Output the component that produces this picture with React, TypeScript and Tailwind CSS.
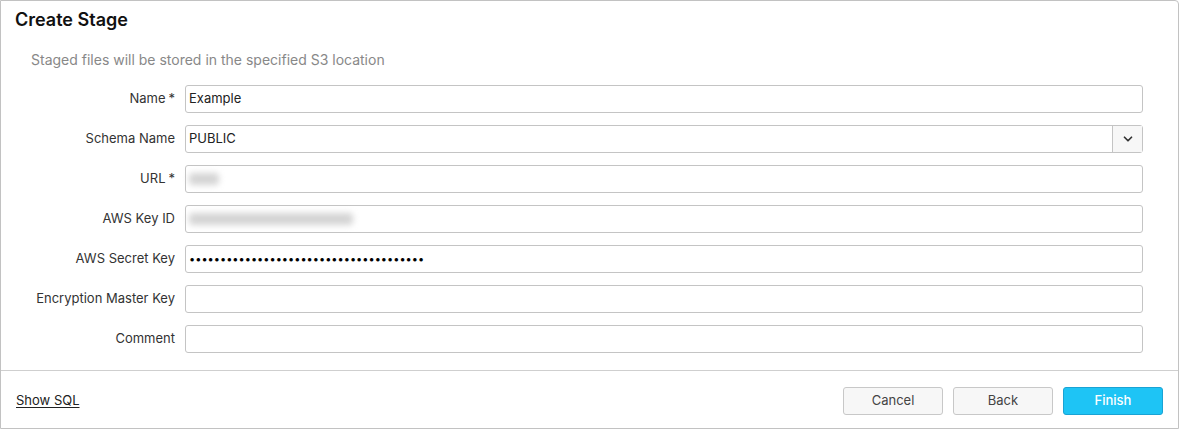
import { ChevronDown } from "lucide-react";

interface FieldProps {
  label: string;
  required?: boolean;
  children: React.ReactNode;
}

function Field({ label, required, children }: FieldProps) {
  return (
    <div className="flex h-[40px] items-center">
      <label className="w-[176px] shrink-0 pr-[2px] text-right text-[13px] text-[#333]">
        {label}
        {required && <span className="ml-[3px]">*</span>}
      </label>
      <div className="ml-[8px] flex-1 pr-[35px]">{children}</div>
    </div>
  );
}

function TextBox({ children }: { children?: React.ReactNode }) {
  return (
    <div className="flex h-[28px] items-center rounded-[3px] border border-[#c4c4c4] bg-white px-[3px] text-[13px] text-[#222]">
      {children}
    </div>
  );
}

function Blurred({ width }: { width: number }) {
  return (
    <div
      className="h-[12px] rounded-sm bg-[#d4d4d4] blur-[3px]"
      style={{ width }}
    />
  );
}

export default function App() {
  return (
    <div className="h-[430px] w-[1179px] bg-white font-['Inter',sans-serif]">
      <div className="flex h-[429px] w-[1179px] flex-col rounded-tr-[4px] border border-[#c2c2c2] bg-white">
        <h1 className="pl-[14px] pt-[8px] text-[18px] font-semibold leading-[22px] text-[#111]">
          Create Stage
        </h1>
        <p className="pl-[30px] pt-[20px] text-[14px] leading-[18px] text-[#888]">
          Staged files will be stored in the specified S3 location
        </p>
        <div className="pt-[10px]">
          <Field label="Name" required>
            <TextBox>Example</TextBox>
          </Field>
          <Field label="Schema Name">
            <div className="flex h-[28px] items-stretch rounded-[3px] border border-[#c4c4c4] bg-white text-[13px] text-[#222]">
              <div className="flex flex-1 items-center px-[3px]">PUBLIC</div>
              <div className="flex w-[30px] items-center justify-center border-l border-[#c4c4c4] bg-[#f7f7f7]">
                <ChevronDown size={14} strokeWidth={3} className="text-[#333]" />
              </div>
            </div>
          </Field>
          <Field label="URL" required>
            <TextBox>
              <Blurred width={30} />
            </TextBox>
          </Field>
          <Field label="AWS Key ID">
            <TextBox>
              <Blurred width={164} />
            </TextBox>
          </Field>
          <Field label="AWS Secret Key">
            <TextBox>
              <span className="text-[11px] tracking-[0px] text-black">
                {"•".repeat(38)}
              </span>
            </TextBox>
          </Field>
          <Field label="Encryption Master Key">
            <TextBox />
          </Field>
          <Field label="Comment">
            <TextBox />
          </Field>
        </div>
        <div className="mt-[11px] flex flex-1 items-center justify-between border-t border-[#cfcfcf] pl-[15px] pr-[15px] pt-[3px]">
          <a className="text-[13px] text-[#222] underline underline-offset-2">
            Show SQL
          </a>
          <div className="flex gap-[10px]">
            <button className="h-[28px] w-[100px] rounded-[3px] border border-[#c8c8c8] bg-[#f7f7f7] text-[13px] text-[#444]">
              Cancel
            </button>
            <button className="h-[28px] w-[100px] rounded-[3px] border border-[#c8c8c8] bg-[#f7f7f7] text-[13px] text-[#444]">
              Back
            </button>
            <button className="h-[28px] w-[100px] rounded-[3px] border border-[#1aa3d4] bg-[#1ec4f5] text-[13px] font-medium text-white">
              Finish
            </button>
          </div>
        </div>
      </div>
    </div>
  );
}
